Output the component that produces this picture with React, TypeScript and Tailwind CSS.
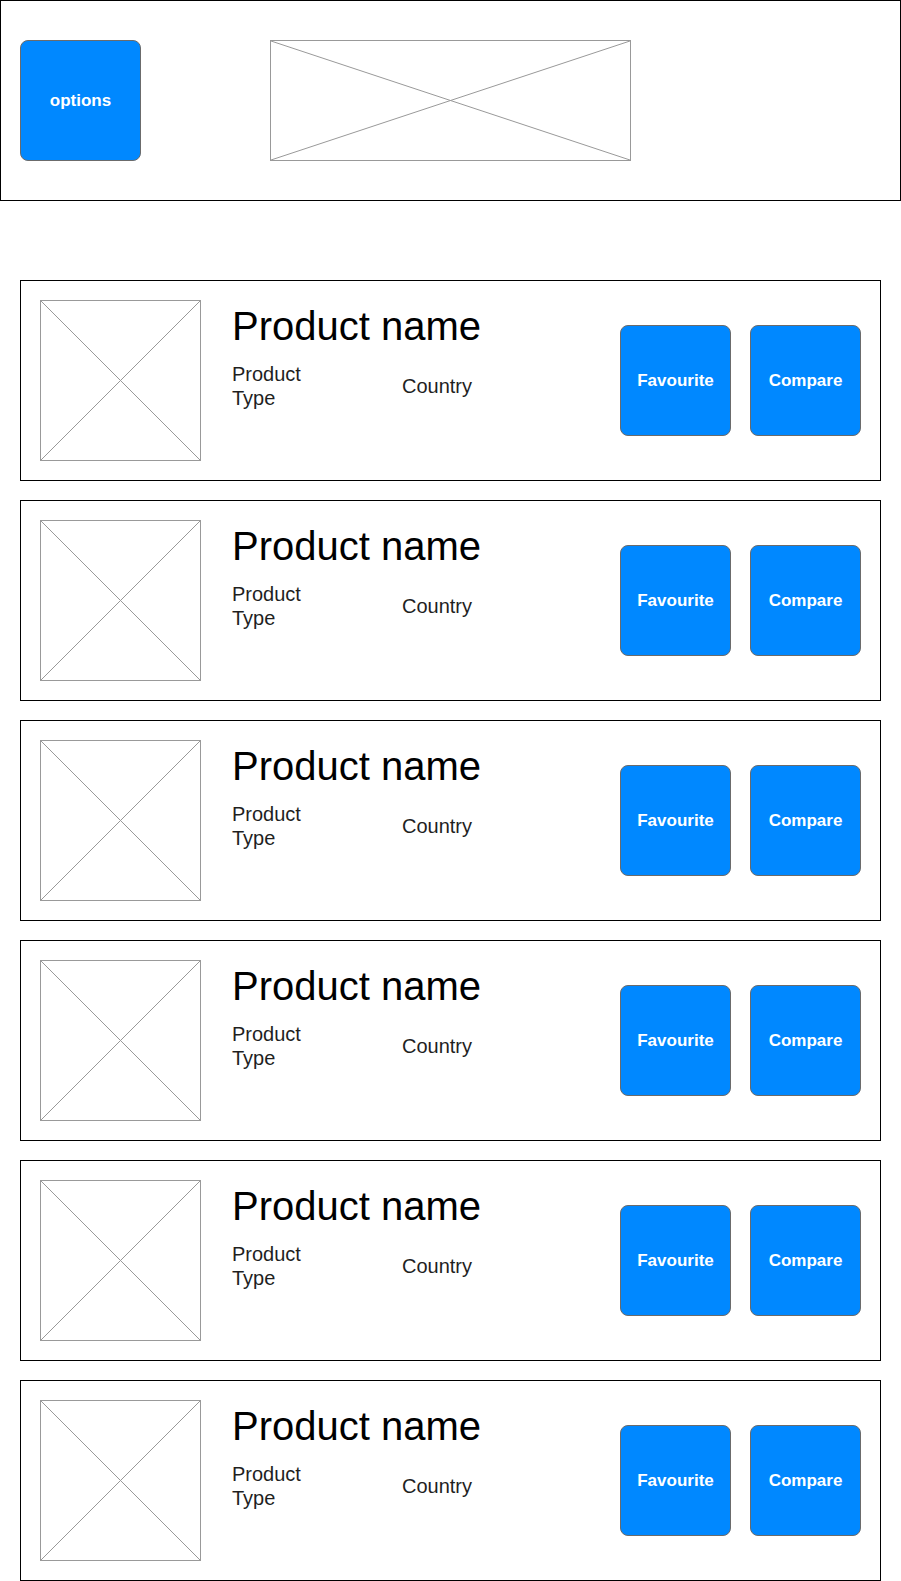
import React from "react";

function Placeholder({ className }: { className: string }) {
  return (
    <div className={`relative border border-[#999999] bg-white ${className}`}>
      <svg className="absolute inset-0 h-full w-full" preserveAspectRatio="none" viewBox="0 0 100 100">
        <line x1="0" y1="0" x2="100" y2="100" stroke="#999999" strokeWidth="1" vectorEffect="non-scaling-stroke" />
        <line x1="100" y1="0" x2="0" y2="100" stroke="#999999" strokeWidth="1" vectorEffect="non-scaling-stroke" />
      </svg>
    </div>
  );
}

function BlueButton({ label, className }: { label: string; className: string }) {
  return (
    <div
      className={`flex items-center justify-center rounded-[8px] border border-[#6b6b6b] bg-[#0088ff] text-[17px] font-bold text-white ${className}`}
    >
      {label}
    </div>
  );
}

function Card() {
  return (
    <div className="flex h-[201px] w-[861px] items-start border border-black bg-white pl-[19px] pr-[19px] pt-[19px]">
      <Placeholder className="h-[161px] w-[161px] shrink-0" />
      <div className="ml-[31px] flex flex-1 flex-col">
        <div className="mt-[2px] text-[40px] leading-[48px] text-black">Product name</div>
        <div className="mt-[12px] flex items-center text-[20px] leading-[24px] text-[#1f1f1f]">
          <div className="w-[170px]">
            Product
            <br />
            Type
          </div>
          <div>Country</div>
        </div>
      </div>
      <div className="mt-[25px] flex gap-[19px]">
        <BlueButton label="Favourite" className="h-[111px] w-[111px]" />
        <BlueButton label="Compare" className="h-[111px] w-[111px]" />
      </div>
    </div>
  );
}

export default function App() {
  return (
    <div className="w-[901px] bg-white" style={{ fontFamily: '"Liberation Sans", Arial, sans-serif' }}>
      <div className="flex h-[201px] w-[901px] items-center border border-black pl-[19px]">
        <BlueButton label="options" className="h-[121px] w-[121px]" />
        <Placeholder className="ml-[129px] h-[121px] w-[361px]" />
      </div>
      <div className="ml-[20px] mt-[79px] flex flex-col gap-[19px]">
        {[0, 1, 2, 3, 4, 5].map((i) => (
          <Card key={i} />
        ))}
      </div>
    </div>
  );
}
